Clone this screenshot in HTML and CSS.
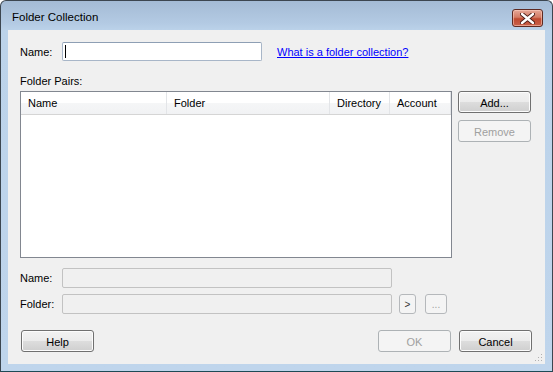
FILE: index.html
```html
<!DOCTYPE html>
<html lang="en">
<head>
  <meta charset="UTF-8" />
  <title>Folder Collection</title>
  <link rel="stylesheet" href="styles.css">
</head>
<body>
  <div class="window">
    <div class="titlebar">
      <span class="title">Folder Collection</span>
      <button class="close">
        <svg width="15" height="11" viewBox="0 0 15 11">
          <path d="M2 1 L13 10 M13 1 L2 10" stroke="#4a1c16" stroke-width="4.2" stroke-linecap="round"/>
          <path d="M2 1 L13 10 M13 1 L2 10" stroke="#ffffff" stroke-width="2.4" stroke-linecap="round"/>
        </svg>
      </button>
    </div>

    <div class="client">
      <div class="name-row">
        <label class="lbl">Name:</label>
        <div class="textbox"><span class="caret"></span></div>
        <a href="#" class="help-link">What is a folder collection?</a>
      </div>

      <div class="pairs-label">Folder Pairs:</div>

      <div class="pairs">
        <div class="list">
          <div class="list-header">
            <div class="col col-name">Name</div>
            <div class="col col-folder">Folder</div>
            <div class="col col-dir">Directory</div>
            <div class="col col-acct">Account</div>
          </div>
        </div>
        <div class="side-buttons">
          <button class="btn">Add...</button>
          <button class="btn" disabled>Remove</button>
        </div>
      </div>

      <div class="field-row first">
        <label class="lbl">Name:</label>
        <div class="textbox disabled"></div>
      </div>
      <div class="field-row">
        <label class="lbl">Folder:</label>
        <div class="textbox disabled"></div>
        <button class="mini narrow" disabled>&gt;</button>
        <button class="mini wide" disabled>...</button>
      </div>

      <div class="footer">
        <button class="btn help-btn">Help</button>
        <div class="spacer"></div>
        <button class="btn" disabled>OK</button>
        <button class="btn">Cancel</button>
      </div>

      <svg class="grip" width="8" height="8" viewBox="0 0 8 8">
        <rect x="6" y="0" width="1" height="1" fill="#b0b0b0"/>
        <rect x="3" y="3" width="1" height="1" fill="#b0b0b0"/>
        <rect x="6" y="3" width="1" height="1" fill="#b0b0b0"/>
        <rect x="0" y="6" width="1" height="1" fill="#b0b0b0"/>
        <rect x="3" y="6" width="1" height="1" fill="#b0b0b0"/>
        <rect x="6" y="6" width="1" height="1" fill="#b0b0b0"/>
      </svg>
    </div>
  </div>
</body>
</html>
```

FILE: styles.css
```css
body {
  margin: 0;
  padding: 0;
  background: #ffffff;
  font-family: 'Liberation Sans', Arial, sans-serif;
  font-size: 11px;
  color: #000000;
}

.window {
  width: 551px;
  height: 370px;
  border: 1px solid #3c4650;
  border-bottom-color: #1e4a55;
  border-radius: 6px 6px 0 0;
  background: linear-gradient(to bottom, #a4bbd5 0px, #b3cae3 22px, #bcd3ea 30px, #bfd5ec 100%);
  display: flex;
  flex-direction: column;
}

.titlebar {
  height: 29px;
  display: flex;
  align-items: flex-start;
  justify-content: space-between;
}

.title {
  font-size: 11.5px;
  margin: 10px 0 0 11px;
  color: #000000;
}

.close {
  width: 31px;
  height: 18px;
  margin: 8px 9px 0 0;
  padding: 0;
  border: 1px solid #5e2a22;
  border-radius: 3px;
  background: linear-gradient(to bottom, #e6a898 0%, #d47c66 45%, #bf4a30 55%, #c9614a 100%);
  box-shadow: inset 0 0 0 1px rgba(255, 210, 195, 0.55);
  display: flex;
  align-items: center;
  justify-content: center;
}

.client {
  position: relative;
  flex: 1;
  margin: 0 7px 7px 7px;
  background: #f0f0f0;
  padding: 12px 0 0 12px;
}

.name-row {
  display: flex;
  align-items: center;
  height: 19px;
}

.lbl {
  width: 42px;
}

.textbox {
  box-sizing: border-box;
  width: 200px;
  height: 19px;
  background: #ffffff;
  border: 1px solid #a8b6c8;
  border-top-color: #8e9fb4;
  border-radius: 2px;
  position: relative;
}

.caret {
  position: absolute;
  left: 2px;
  top: 2px;
  width: 1px;
  height: 13px;
  background: #000000;
}

.help-link {
  margin-left: 15px;
  color: #0000ff;
  text-decoration: underline;
}

.pairs-label {
  margin-top: 14px;
  height: 13px;
  line-height: 13px;
}

.pairs {
  display: flex;
  margin-top: 3px;
}

.list {
  box-sizing: border-box;
  width: 432px;
  height: 167px;
  background: #ffffff;
  border: 1px solid #828790;
}

.list-header {
  display: flex;
  height: 22px;
  border-bottom: 1px solid #d5d5d5;
  background: linear-gradient(to bottom, #ffffff 0%, #ffffff 50%, #f5f6f7 51%, #f1f2f4 100%);
}

.col {
  box-sizing: border-box;
  line-height: 22px;
  padding-left: 7px;
  border-right: 1px solid #e3e5e8;
}

.col-name { width: 146px; }
.col-folder { width: 163px; }
.col-dir { width: 60px; }
.col-acct { width: 61px; }

.side-buttons {
  display: flex;
  flex-direction: column;
  gap: 7px;
  margin-left: 6px;
}

.btn {
  box-sizing: border-box;
  width: 73px;
  height: 22px;
  padding: 1px 0 0 0;
  font-family: inherit;
  font-size: 11px;
  color: #000000;
  border: 1px solid #707070;
  border-radius: 3px;
  background: linear-gradient(to bottom, #f2f2f2 0%, #ebebeb 50%, #dddddd 51%, #cfcfcf 100%);
  box-shadow: inset 0 0 0 1px #fcfcfc;
}

.btn:disabled {
  color: #a0a0a0;
  border-color: #adb2b5;
  background: #f4f4f4;
  box-shadow: none;
}

.field-row {
  display: flex;
  align-items: center;
  height: 20px;
  margin-top: 6px;
}

.field-row.first {
  margin-top: 10px;
}

.field-row .textbox {
  width: 330px;
  height: 20px;
}

.textbox.disabled {
  background: #f0f0f0;
  border-color: #c2c2c2;
}

.mini {
  box-sizing: border-box;
  height: 20px;
  padding: 0;
  font-family: inherit;
  font-size: 10px;
  color: #6d6d6d;
  background: #f4f4f4;
  border: 1px solid #b5b8bb;
  border-radius: 3px;
}

.mini.narrow {
  width: 17px;
  margin-left: 7px;
  color: #333333;
}

.mini.wide {
  width: 22px;
  margin-left: 9px;
  color: #a0a0a0;
}

.footer {
  display: flex;
  margin-top: 16px;
  margin-right: 13px;
  gap: 8px;
}

.help-btn {
  margin-left: 1px;
}

.spacer {
  flex: 1;
}

.grip {
  position: absolute;
  right: 2px;
  bottom: 2px;
}
```
